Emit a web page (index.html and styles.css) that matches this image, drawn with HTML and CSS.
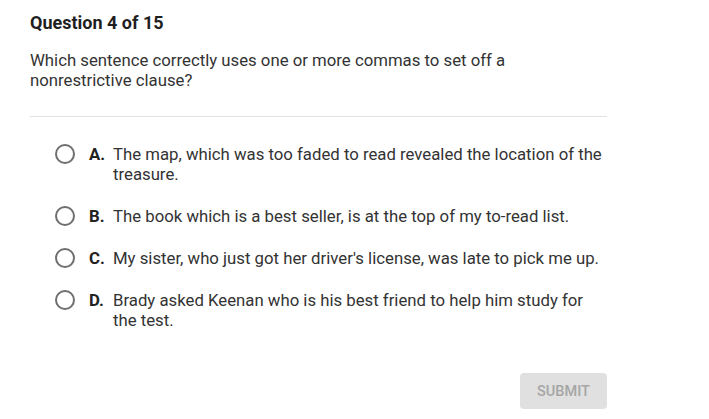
FILE: index.html
```html
<!DOCTYPE html>
<html>
<head>
<meta charset="utf-8">
<link rel="stylesheet" href="styles.css">
</head>
<body>
<div class="quiz">
  <h1 class="title">Question 4 of 15</h1>
  <p class="prompt">Which sentence correctly uses one or more commas to set off a nonrestrictive clause?</p>
  <div class="divider"></div>
  <ul class="options">
    <li class="option"><span class="radio"></span><span class="label">A.</span><span class="text">The map, which was too faded to read revealed the location of the treasure.</span></li>
    <li class="option"><span class="radio"></span><span class="label">B.</span><span class="text">The book which is a best seller, is at the top of my to-read list.</span></li>
    <li class="option"><span class="radio"></span><span class="label">C.</span><span class="text">My sister, who just got her driver's license, was late to pick me up.</span></li>
    <li class="option"><span class="radio"></span><span class="label">D.</span><span class="text">Brady asked Keenan who is his best friend to help him study for the test.</span></li>
  </ul>
  <div class="actions"><button class="submit">SUBMIT</button></div>
</div>
</body>
</html>
```
FILE: styles.css
```css
html, body { margin: 0; padding: 0; background: #fff; }
body { font-family: Roboto, "Liberation Sans", sans-serif; color: #222; }
.quiz { width: 577px; padding: 12px 0 0 30px; }
.title { margin: 0; font-size: 18px; font-weight: 700; line-height: 21px; color: #1f1f1f; }
.prompt { margin: 17px 0 0; font-size: 16.75px; line-height: 20px; color: #333; }
.divider { height: 1px; background: #e2e2e2; margin-top: 26px; }
.options { list-style: none; margin: 16px 0 0; padding: 0; }
.option { display: flex; align-items: flex-start; padding: 11px 0 11px 25px; font-size: 16.75px; line-height: 20px; color: #333; }
.radio { flex: none; width: 16px; height: 16px; border: 2px solid #6f6f6f; border-radius: 50%; margin-right: 14px; }
.label { flex: none; font-weight: 700; width: 24px; color: #222; }
.text { flex: 1; }
.actions { display: flex; justify-content: flex-end; margin-top: 32px; }
.submit { width: 87px; height: 36px; border: none; border-radius: 4px; background: #e0e0e0; color: #a6a6a6; font-family: Roboto, "Liberation Sans", sans-serif; font-size: 14.5px; font-weight: 500; padding: 0; }
```
